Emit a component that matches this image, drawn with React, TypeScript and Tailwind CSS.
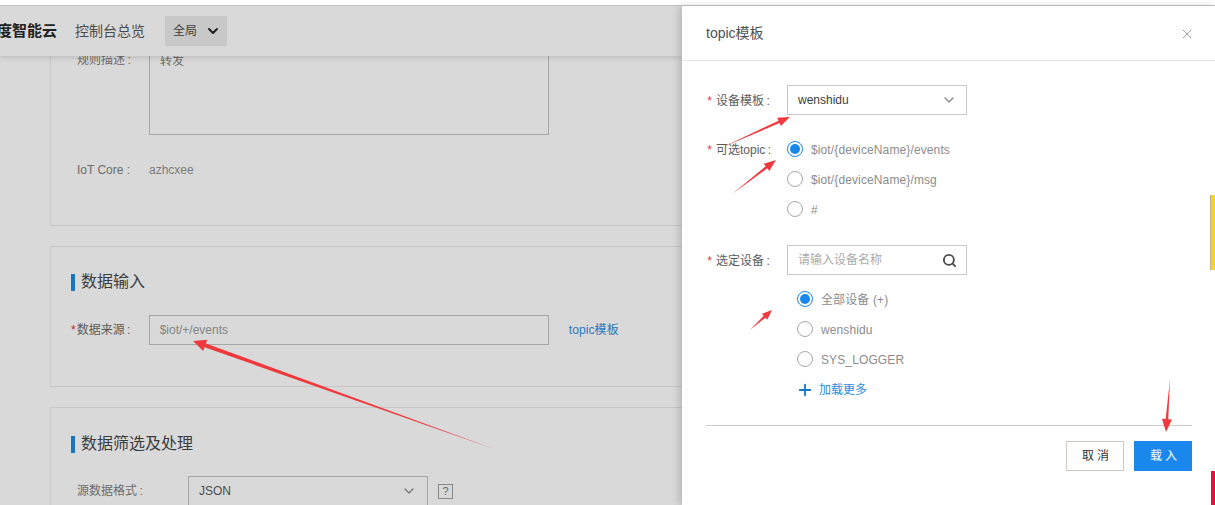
import { ChevronDown, Plus, Search, X } from "lucide-react";

const arrows = [
  { x1: 494, y1: 449, x2: 193, y2: 341, neck: 2, head: 6, len: 13 },
  { x1: 723, y1: 147, x2: 790, y2: 117, neck: 1.3, head: 4.5, len: 12 },
  { x1: 732, y1: 194, x2: 776, y2: 160, neck: 1.3, head: 4.5, len: 12 },
  { x1: 750, y1: 330, x2: 772, y2: 310, neck: 1.3, head: 4, len: 10 },
  { x1: 1170, y1: 379, x2: 1166, y2: 432, neck: 1.3, head: 5, len: 13 },
];

const arrowPoints = (a: (typeof arrows)[number]) => {
  const dx = a.x2 - a.x1;
  const dy = a.y2 - a.y1;
  const d = Math.hypot(dx, dy);
  const ux = dx / d;
  const uy = dy / d;
  const bx = a.x2 - ux * a.len;
  const by = a.y2 - uy * a.len;
  const pts = [
    [a.x1, a.y1],
    [bx - uy * a.neck, by + ux * a.neck],
    [bx - uy * a.head, by + ux * a.head],
    [a.x2, a.y2],
    [bx + uy * a.head, by - ux * a.head],
    [bx + uy * a.neck, by - ux * a.neck],
  ];
  return pts.map((p) => p.join(",")).join(" ");
};

const Radio = ({ label, checked }: { label: string; checked?: boolean }) => (
  <div className="flex h-[30px] items-center gap-2">
    <span
      className={`flex h-4 w-4 items-center justify-center rounded-full border bg-white ${
        checked ? "border-[#1a87ec]" : "border-[#a8a8a8]"
      }`}
    >
      {checked && <span className="h-2.5 w-2.5 rounded-full bg-[#1a87ec]" />}
    </span>
    <span className="pt-px text-xs tracking-[0.12px] text-[#8c8c8c]">{label}</span>
  </div>
);

const Label = ({ text }: { text: string }) => (
  <div className="flex h-[30px] w-[81px] shrink-0 items-center pt-px text-xs text-[#5c5c5c]">
    <span className="mr-[3px] w-[7px] text-center text-[#e0364c]">*</span>
    {text}
  </div>
);

const SectionTitle = ({ text }: { text: string }) => (
  <div className="flex items-center gap-1.5 text-base text-[#3c3c3c]">
    <span className="h-[17px] w-1 bg-[#1b75bc]" />
    {text}
  </div>
);

export default function App() {
  return (
    <div
      className="relative flex h-[505px] w-[1215px] flex-col overflow-hidden bg-white"
      style={{ fontFamily: "'Liberation Sans', 'Noto Sans CJK SC', sans-serif" }}
    >
      <div className="h-[6px] shrink-0 border-b border-[#c4c4c4] bg-white" />

      <div className="flex min-h-0 flex-1">
        {/* dimmed console page */}
        <main className="flex w-[682px] shrink-0 flex-col overflow-hidden bg-[#d9d9d9]">
          <header className="relative z-10 flex h-[50px] shrink-0 items-center bg-[#d9d9d9] shadow-[0_2px_5px_rgba(0,0,0,0.12)]">
            <span className="-ml-[3px] text-[15px] font-bold text-[#222222]">度智能云</span>
            <span className="ml-[18px] text-sm text-[#4c4c4c]">控制台总览</span>
            <div className="ml-5 flex h-[30px] w-[62px] items-center gap-2 bg-[#c8c8c8] pl-2 text-xs text-[#3c3c3c]">
              全局
              <ChevronDown size={16} strokeWidth={3} className="text-[#222222]" />
            </div>
          </header>

          <div className="-mt-[40px] flex flex-col gap-5 pl-[50px]">
            <section className="h-[210px] border-b border-l border-[#c6c6c6] pl-[26px] pt-[34px]">
              <div className="flex">
                <span className="w-[72px] pt-[2px] text-xs text-[#6c6c6c]">规则描述{"\u2009"}:</span>
                <div className="h-[85px] w-[400px] border border-[#a6a6a6] px-2.5 pt-[2px] text-xs text-[#6c6c6c]">
                  转发
                </div>
              </div>
              <div className="mt-[27px] flex text-xs text-[#6c6c6c]">
                <span className="w-[72px]">IoT Core :</span>
                <span className="text-[#7c7c7c]">azhcxee</span>
              </div>
            </section>

            <section className="h-[141px] border-y border-l border-[#c6c6c6] pl-5 pt-[23px]">
              <SectionTitle text="数据输入" />
              <div className="mt-[21px] flex items-center text-xs">
                <span className="text-[#c0263a]">*</span>
                <span className="ml-px w-[72px] text-[#5c5c5c]">数据来源{"\u2009"}:</span>
                <div className="flex h-[30px] w-[400px] items-center border border-[#a6a6a6] px-2.5 text-[#858585]">
                  $iot/+/events
                </div>
                <span className="ml-5 tracking-[0.12px] text-[#2a78bd]">topic模板</span>
              </div>
            </section>

            <section className="border-t border-l border-[#c6c6c6] pb-5 pl-5 pt-[24px]">
              <SectionTitle text="数据筛选及处理" />
              <div className="mt-[20px] flex items-center pl-1.5 text-xs">
                <span className="w-[111px] text-[#6c6c6c]">源数据格式{"\u2009"}:</span>
                <div className="flex h-[30px] w-[240px] items-center justify-between border border-[#a6a6a6] px-2.5 text-[#4c4c4c]">
                  JSON
                  <ChevronDown size={16} className="text-[#777777]" />
                </div>
                <span className="ml-2.5 flex h-[15px] w-[15px] items-center justify-center border border-[#888888] text-[11px] text-[#666666]">
                  ?
                </span>
              </div>
            </section>
          </div>
        </main>

        {/* topic template drawer */}
        <aside className="relative z-20 flex min-w-0 flex-1 flex-col bg-white shadow-[-3px_0_7px_rgba(0,0,0,0.16)]">
          <div className="flex h-[55px] shrink-0 items-center justify-between border-b border-[#e4e4e4] pl-6 pr-5">
            <span className="text-sm text-[#505050]">topic模板</span>
            <X size={16} strokeWidth={1.25} className="mt-0.5 text-[#888888]" />
          </div>

          <div className="px-6 pt-6">
            <div className="flex">
              <Label text={"设备模板\u2009:"} />
              <div className="flex h-[30px] w-[180px] items-center justify-between border border-[#c8c8c8] pl-2.5 pr-[9px] text-xs text-[#3c3c3c]">
                wenshidu
                <ChevronDown size={16} className="text-[#888888]" />
              </div>
            </div>

            <div className="mt-[19px] flex">
              <Label text={"可选topic\u2009:"} />
              <div>
                <Radio label="$iot/{deviceName}/events" checked />
                <Radio label="$iot/{deviceName}/msg" />
                <Radio label="#" />
              </div>
            </div>

            <div className="mt-[21px] flex">
              <Label text={"选定设备\u2009:"} />
              <div>
                <div className="flex h-[30px] w-[180px] items-center justify-between border border-[#c8c8c8] pl-2.5 pr-[9px] text-xs text-[#aaaaaa]">
                  请输入设备名称
                  <Search size={15} strokeWidth={3} className="text-[#4c4c4c]" />
                </div>
                <div className="ml-2.5 mt-[9px]">
                  <Radio label="全部设备 (+)" checked />
                  <Radio label="wenshidu" />
                  <Radio label="SYS_LOGGER" />
                  <div className="-ml-px flex h-[32px] items-center gap-[5px] text-xs text-[#2a8ce0]">
                    <Plus size={18} strokeWidth={2.5} className="text-[#1b78c8]" />
                    加载更多
                  </div>
                </div>
              </div>
            </div>

            <div className="mt-[19px] w-[486px] border-t border-[#cccccc]" />

            <div className="mt-[15px] flex w-[486px] justify-end gap-2.5 text-xs">
              <button className="h-[30px] w-[58px] border border-[#d0c8c0] pl-1 tracking-[3px] text-[#333333]">
                取消
              </button>
              <button className="h-[30px] w-[58px] bg-[#1a87ec] pl-1 tracking-[3px] text-white">
                载入
              </button>
            </div>
          </div>
        </aside>
      </div>

      {/* bits of the page behind, showing at the right edge */}
      <div className="absolute left-[1210px] top-[195px] z-30 h-[75px] w-[5px] border-l border-[#b8b090] bg-[#f5d327]" />
      <div className="absolute left-[1211px] top-[471px] z-30 h-[34px] w-1 bg-[#e8103f]" />

      {/* hand-drawn annotation arrows */}
      <svg className="pointer-events-none absolute inset-0 z-40" width="1215" height="505">
        {arrows.map((a, i) => (
          <polygon key={i} points={arrowPoints(a)} fill="#f0393c" />
        ))}
      </svg>
    </div>
  );
}
